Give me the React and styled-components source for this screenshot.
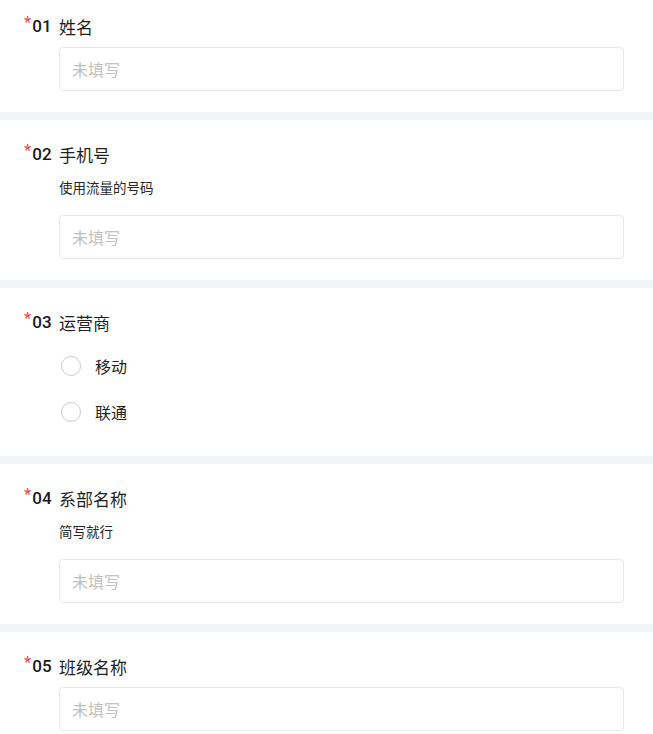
import React from "react";
import styled, { createGlobalStyle } from "styled-components";

const GlobalStyle = createGlobalStyle`
  html, body {
    margin: 0;
    padding: 0;
    background: #f3f4f6;
  }
  body {
    font-family: "Noto Sans CJK SC", "Noto Sans", sans-serif;
    color: #1f1f1f;
  }
`;

const Page = styled.div`
  margin-top: -8px;
  display: flex;
  flex-direction: column;
  gap: 8px;
  background: #f3f4f6;
`;

const Section = styled.div`
  background: #fff;
  padding: 23px 29px 21px 24px;
  display: flex;
  flex-direction: column;
`;

const Header = styled.div`
  display: flex;
  align-items: center;
  height: 22px;
`;

const Num = styled.div`
  width: 35px;
  flex-shrink: 0;
  display: flex;
  align-items: center;
  font-family: "Roboto", "Liberation Sans", sans-serif;
  font-weight: 500;
  font-size: 17px;
  color: #1a1a1a;
`;

const Star = styled.span`
  color: #f5484a;
  font-size: 17px;
  font-weight: 400;
  align-self: flex-start;
  margin-top: -4px;
  margin-right: 1px;
`;

const Title = styled.div`
  font-size: 17px;
  color: #1f1f1f;
`;

const Body = styled.div`
  padding-left: 35px;
  display: flex;
  flex-direction: column;
`;

const Desc = styled.div`
  font-size: 13.5px;
  color: #262626;
  line-height: 20px;
  margin-top: 12px;
`;

const Input = styled.input`
  box-sizing: border-box;
  margin-top: ${(p) => (p.$desc ? "18px" : "10px")};
  height: 44px;
  width: 100%;
  border: 1px solid #e6e6e6;
  border-radius: 4px;
  padding: 0 12px;
  font-family: "Noto Sans CJK SC", "Noto Sans", sans-serif;
  font-size: 16px;
  outline: none;
  &::placeholder {
    color: #c2c2c2;
  }
`;

const Options = styled.div`
  display: flex;
  flex-direction: column;
  margin-top: 10px;
`;

const Option = styled.label`
  display: flex;
  align-items: center;
  height: 46px;
  gap: 14px;
  font-size: 16px;
  color: #1f1f1f;
  margin-left: 2px;
`;

const Circle = styled.span`
  box-sizing: border-box;
  width: 20px;
  height: 20px;
  border-radius: 50%;
  border: 1.5px solid #cccccc;
`;

const questions = [
  { no: "01", title: "姓名", type: "text" },
  { no: "02", title: "手机号", desc: "使用流量的号码", type: "text" },
  { no: "03", title: "运营商", type: "radio", options: ["移动", "联通"] },
  { no: "04", title: "系部名称", desc: "简写就行", type: "text" },
  { no: "05", title: "班级名称", type: "text" },
];

export default function App() {
  return (
    <>
      <GlobalStyle />
      <Page>
        {questions.map((q) => (
          <Section key={q.no}>
            <Header>
              <Num>
                <Star>*</Star>
                {q.no}
              </Num>
              <Title>{q.title}</Title>
            </Header>
            <Body>
              {q.desc && <Desc>{q.desc}</Desc>}
              {q.type === "text" ? (
                <Input $desc={!!q.desc} placeholder="未填写" />
              ) : (
                <Options>
                  {q.options.map((o) => (
                    <Option key={o}>
                      <Circle />
                      {o}
                    </Option>
                  ))}
                </Options>
              )}
            </Body>
          </Section>
        ))}
      </Page>
    </>
  );
}
